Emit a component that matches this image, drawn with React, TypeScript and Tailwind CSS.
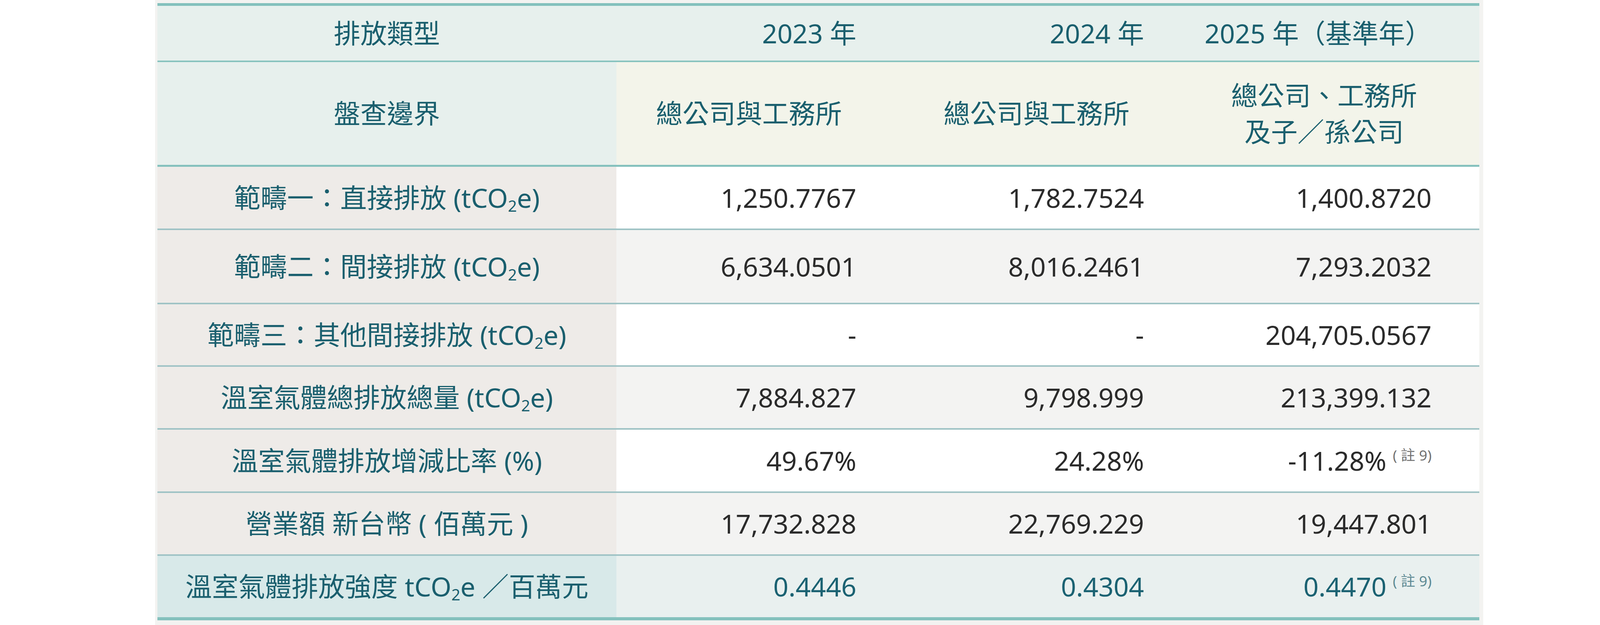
import type { ReactNode } from 'react';

interface DataRow {
  label: ReactNode;
  values: ReactNode[];
  height: string;
  cellBg: string;
  labelBg: string;
  numColor: string;
}

const Co2 = () => (
  <>
    tCO<sub className="text-[40px]">2</sub>e
  </>
);

const Note = ({ color }: { color: string }) => (
  <span className={`relative -top-[26px] ml-[16px] text-[37px] ${color}`}>( 註 9)</span>
);

const rows: DataRow[] = [
  {
    label: <>範疇一：直接排放 (<Co2 />)</>,
    values: ['1,250.7767', '1,782.7524', '1,400.8720'],
    height: 'h-[162px]',
    cellBg: 'bg-white',
    labelBg: 'bg-[#eeebe8]',
    numColor: 'text-[#2b2b2b]',
  },
  {
    label: <>範疇二：間接排放 (<Co2 />)</>,
    values: ['6,634.0501', '8,016.2461', '7,293.2032'],
    height: 'h-[190px]',
    cellBg: 'bg-[#f3f3f2]',
    labelBg: 'bg-[#eeebe8]',
    numColor: 'text-[#2b2b2b]',
  },
  {
    label: <>範疇三：其他間接排放 (<Co2 />)</>,
    values: ['-', '-', '204,705.0567'],
    height: 'h-[160px]',
    cellBg: 'bg-white',
    labelBg: 'bg-[#eeebe8]',
    numColor: 'text-[#2b2b2b]',
  },
  {
    label: <>溫室氣體總排放總量 (<Co2 />)</>,
    values: ['7,884.827', '9,798.999', '213,399.132'],
    height: 'h-[161px]',
    cellBg: 'bg-[#f3f3f2]',
    labelBg: 'bg-[#eeebe8]',
    numColor: 'text-[#2b2b2b]',
  },
  {
    label: <>溫室氣體排放增減比率 (%)</>,
    values: ['49.67%', '24.28%', <>-11.28%<Note color="text-[#727272]" /></>],
    height: 'h-[162px]',
    cellBg: 'bg-white',
    labelBg: 'bg-[#eeebe8]',
    numColor: 'text-[#2b2b2b]',
  },
  {
    label: <>營業額 新台幣 ( 佰萬元 )</>,
    values: ['17,732.828', '22,769.229', '19,447.801'],
    height: 'h-[161px]',
    cellBg: 'bg-[#f3f3f2]',
    labelBg: 'bg-[#eeebe8]',
    numColor: 'text-[#2b2b2b]',
  },
  {
    label: <>溫室氣體排放強度 <Co2 /> ／百萬元</>,
    values: ['0.4446', '0.4304', <>0.4470<Note color="text-[#5e8a93]" /></>],
    height: 'h-[165px]',
    cellBg: 'bg-[#e9f0ef]',
    labelBg: 'bg-[#d8e9e9]',
    numColor: 'text-[#1b6272]',
  },
];

export default function App() {
  return (
    <div className="w-[4194px] h-[1600px] bg-white flex font-['Noto_Sans','Noto_Sans_CJK_TC',sans-serif] text-[68px] leading-[1.3]">
      <div className="ml-[397px] w-[3400px] h-full bg-[#f3f3f1] pt-[8px] pl-[6px] pr-[10px]">
        <div className="w-[3384px] border-t-[7px] border-[#84c1bd] text-[#1a5f6e]">
          {/* Header row: years */}
          <div className="grid grid-cols-[1175px_1fr_1fr_1fr] h-[144px] bg-[#e7f0ed] border-b-[4px] border-[#88c3bf]">
            <div className="flex items-center justify-center">排放類型</div>
            <div className="flex items-center justify-end pr-[122px]">2023 年</div>
            <div className="flex items-center justify-end pr-[122px]">2024 年</div>
            <div className="flex items-center justify-end pr-[122px]">2025 年（基準年）</div>
          </div>

          {/* Header row: boundaries */}
          <div className="grid grid-cols-[1175px_1fr_1fr_1fr] h-[268px] border-b-[5px] border-[#84c1bd]">
            <div className="flex items-center justify-center bg-[#e7f0ed]">盤查邊界</div>
            <div className="flex items-center justify-center bg-[#f3f4ea] pl-[62px] pr-[120px]">總公司與工務所</div>
            <div className="flex items-center justify-center bg-[#f3f4ea] pl-[62px] pr-[120px]">總公司與工務所</div>
            <div className="flex items-center justify-center bg-[#f3f4ea] pl-[62px] pr-[120px] text-center leading-[1.36]">
              總公司、工務所
              <br />
              及子／孫公司
            </div>
          </div>

          {rows.map((row, i) => (
            <div
              key={i}
              className={`grid grid-cols-[1175px_1fr_1fr_1fr] ${row.height} ${
                i === rows.length - 1 ? 'border-b-[8px] border-[#84c1bd]' : 'border-b-[4px] border-[#9fc3c5]'
              }`}
            >
              <div className={`flex items-center justify-center whitespace-nowrap ${row.labelBg}`}>
                <span>{row.label}</span>
              </div>
              {row.values.map((v, j) => (
                <div key={j} className={`flex items-center justify-end pr-[122px] ${row.cellBg} ${row.numColor}`}>
                  <span>{v}</span>
                </div>
              ))}
            </div>
          ))}
        </div>
      </div>
    </div>
  );
}
